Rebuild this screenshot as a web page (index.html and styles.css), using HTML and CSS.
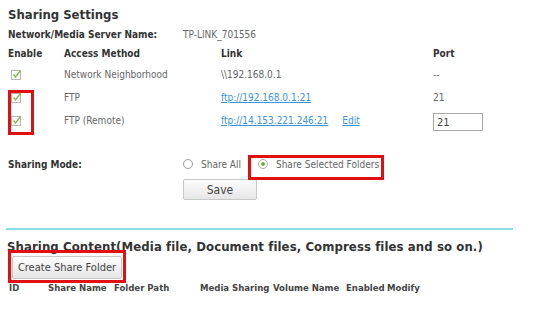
FILE: index.html
```html
<!DOCTYPE html>
<html lang="en">
<head>
    <meta charset="UTF-8">
    <title>Sharing Settings</title>
    <link rel="stylesheet" href="styles.css">
</head>
<body>
    <h2 class="title">Sharing Settings</h2>

    <div class="server-row">
        <span class="label">Network/Media Server Name:</span>
        <span class="value">TP-LINK_701556</span>
    </div>

    <div class="access-table">
        <div class="row head">
            <span>Enable</span>
            <span>Access Method</span>
            <span>Link</span>
            <span>Port</span>
        </div>
        <div class="row">
            <span class="check"><svg width="11" height="11" viewBox="0 0 11 11"><rect x="0.5" y="1.5" width="9" height="9" fill="#fff" stroke="#b4b8a8"/><path d="M2.5 5.5 L4.6 8 L9.5 1.5" fill="none" stroke="#86b84e" stroke-width="1.4"/></svg></span>
            <span>Network Neighborhood</span>
            <span>\\192.168.0.1</span>
            <span>--</span>
        </div>
        <div class="row">
            <span class="check"><svg width="11" height="11" viewBox="0 0 11 11"><rect x="0.5" y="1.5" width="9" height="9" fill="#fff" stroke="#b4b8a8"/><path d="M2.5 5.5 L4.6 8 L9.5 1.5" fill="none" stroke="#86b84e" stroke-width="1.4"/></svg></span>
            <span>FTP</span>
            <span><a href="#">ftp://192.168.0.1:21</a></span>
            <span>21</span>
        </div>
        <div class="row">
            <span class="check"><svg width="11" height="11" viewBox="0 0 11 11"><rect x="0.5" y="1.5" width="9" height="9" fill="#fff" stroke="#b4b8a8"/><path d="M2.5 5.5 L4.6 8 L9.5 1.5" fill="none" stroke="#86b84e" stroke-width="1.4"/></svg></span>
            <span>FTP (Remote)</span>
            <span><a href="#">ftp://14.153.221.246:21</a><a href="#" class="edit">Edit</a></span>
            <span><input type="text" class="port-input" value="21"></span>
        </div>
        <div class="mark mark-checks"></div>
    </div>

    <div class="mode-row">
        <span class="label">Sharing Mode:</span>
        <div class="radios">
            <span class="radio"><span class="dot"></span>Share All</span>
            <span class="radio selected"><span class="dot"></span>Share Selected Folders</span>
            <div class="mark mark-radio"></div>
        </div>
    </div>

    <button class="btn save-btn">Save</button>

    <div class="divider"></div>

    <h2 class="title content-title">Sharing Content(Media file, Document files, Compress files and so on.)</h2>

    <div class="create-wrap">
        <button class="btn create-btn">Create Share Folder</button>
    </div>

    <div class="folder-head">
        <span>ID</span>
        <span>Share Name</span>
        <span>Folder Path</span>
        <span>Media Sharing</span>
        <span>Volume Name</span>
        <span>Enabled</span>
        <span>Modify</span>
    </div>
</body>
</html>
```

FILE: styles.css
```css
body {
    margin: 0;
    padding: 6px 8px 0 8px;
    font-family: "DejaVu Sans Condensed", "DejaVu Sans", sans-serif;
    font-stretch: condensed;
    font-size: 10px;
    color: #666;
    background: #fff;
}
.title {
    margin: 0;
    font-size: 13px;
    line-height: 18px;
    font-weight: bold;
    color: #333;
}
.label {
    font-weight: bold;
    color: #333;
}
.server-row {
    display: flex;
    height: 20px;
    align-items: center;
}
.server-row .label {
    width: 175px;
}
.access-table {
    position: relative;
}
.row {
    display: grid;
    grid-template-columns: 56px 157px 212px auto;
    height: 23px;
    align-items: center;
}
.row.head {
    height: 19px;
    font-weight: bold;
    color: #333;
}
.check {
    padding-left: 3px;
    display: flex;
}
a {
    color: #3a94dc;
}
.edit {
    margin-left: 14px;
}
.port-input {
    width: 50px;
    height: 18px;
    box-sizing: border-box;
    border: 1px solid #a8a8a8;
    padding: 0 3px;
    font-family: inherit;
    font-stretch: condensed;
    font-size: 11px;
    color: #444;
    margin-top: 3px;
}
.mark {
    position: absolute;
    border: 3px solid #e01010;
}
.mark-checks {
    left: 0;
    top: 46px;
    width: 20px;
    height: 39px;
}
.mode-row {
    display: flex;
    align-items: center;
    height: 20px;
    margin-top: 22px;
}
.mode-row .label {
    width: 175px;
}
.radios {
    position: relative;
    display: flex;
    align-items: center;
}
.radio {
    display: flex;
    align-items: center;
    margin-right: 17px;
}
.dot {
    width: 8px;
    height: 8px;
    border: 1px solid #999;
    border-radius: 50%;
    margin-right: 8px;
    background: #fff;
    position: relative;
}
.selected .dot {
    border-color: #aaa;
}
.selected .dot::after {
    content: "";
    position: absolute;
    left: 2px;
    top: 2px;
    width: 4px;
    height: 4px;
    border-radius: 50%;
    background: #6fb03c;
}
.mark-radio {
    left: 65px;
    top: -4px;
    width: 130px;
    height: 19px;
}
.btn {
    display: block;
    font-family: inherit;
    font-stretch: condensed;
    font-size: 11px;
    color: #444;
    background: linear-gradient(#fdfdfd, #e6e6e6);
    border: 1px solid #c8c8c8;
    border-radius: 2px;
    padding: 0;
}
.save-btn {
    margin: 5px 0 0 175px;
    width: 74px;
    height: 21px;
    font-size: 12px;
}
.divider {
    margin: 28px 0 0 -2px;
    width: 507px;
    height: 2px;
    background: #8fdbe2;
}
.content-title {
    margin-top: 8px;
    margin-left: -1px;
    letter-spacing: 0.1px;
}
.create-wrap {
    margin-top: -6px;
    width: 112px;
    height: 27px;
    border: 3px solid #e01010;
    display: flex;
    align-items: center;
    justify-content: center;
    position: relative;
}
.create-btn {
    width: 110px;
    height: 23px;
    margin-top: 2px;
}
.folder-head {
    display: grid;
    grid-template-columns: 39px 66px 86px 73px 73px 41px auto;
    margin: -3px 0 0 1px;
    height: 15px;
    align-items: center;
    font-size: 9.5px;
    font-weight: bold;
    white-space: nowrap;
    color: #444;
}
```
